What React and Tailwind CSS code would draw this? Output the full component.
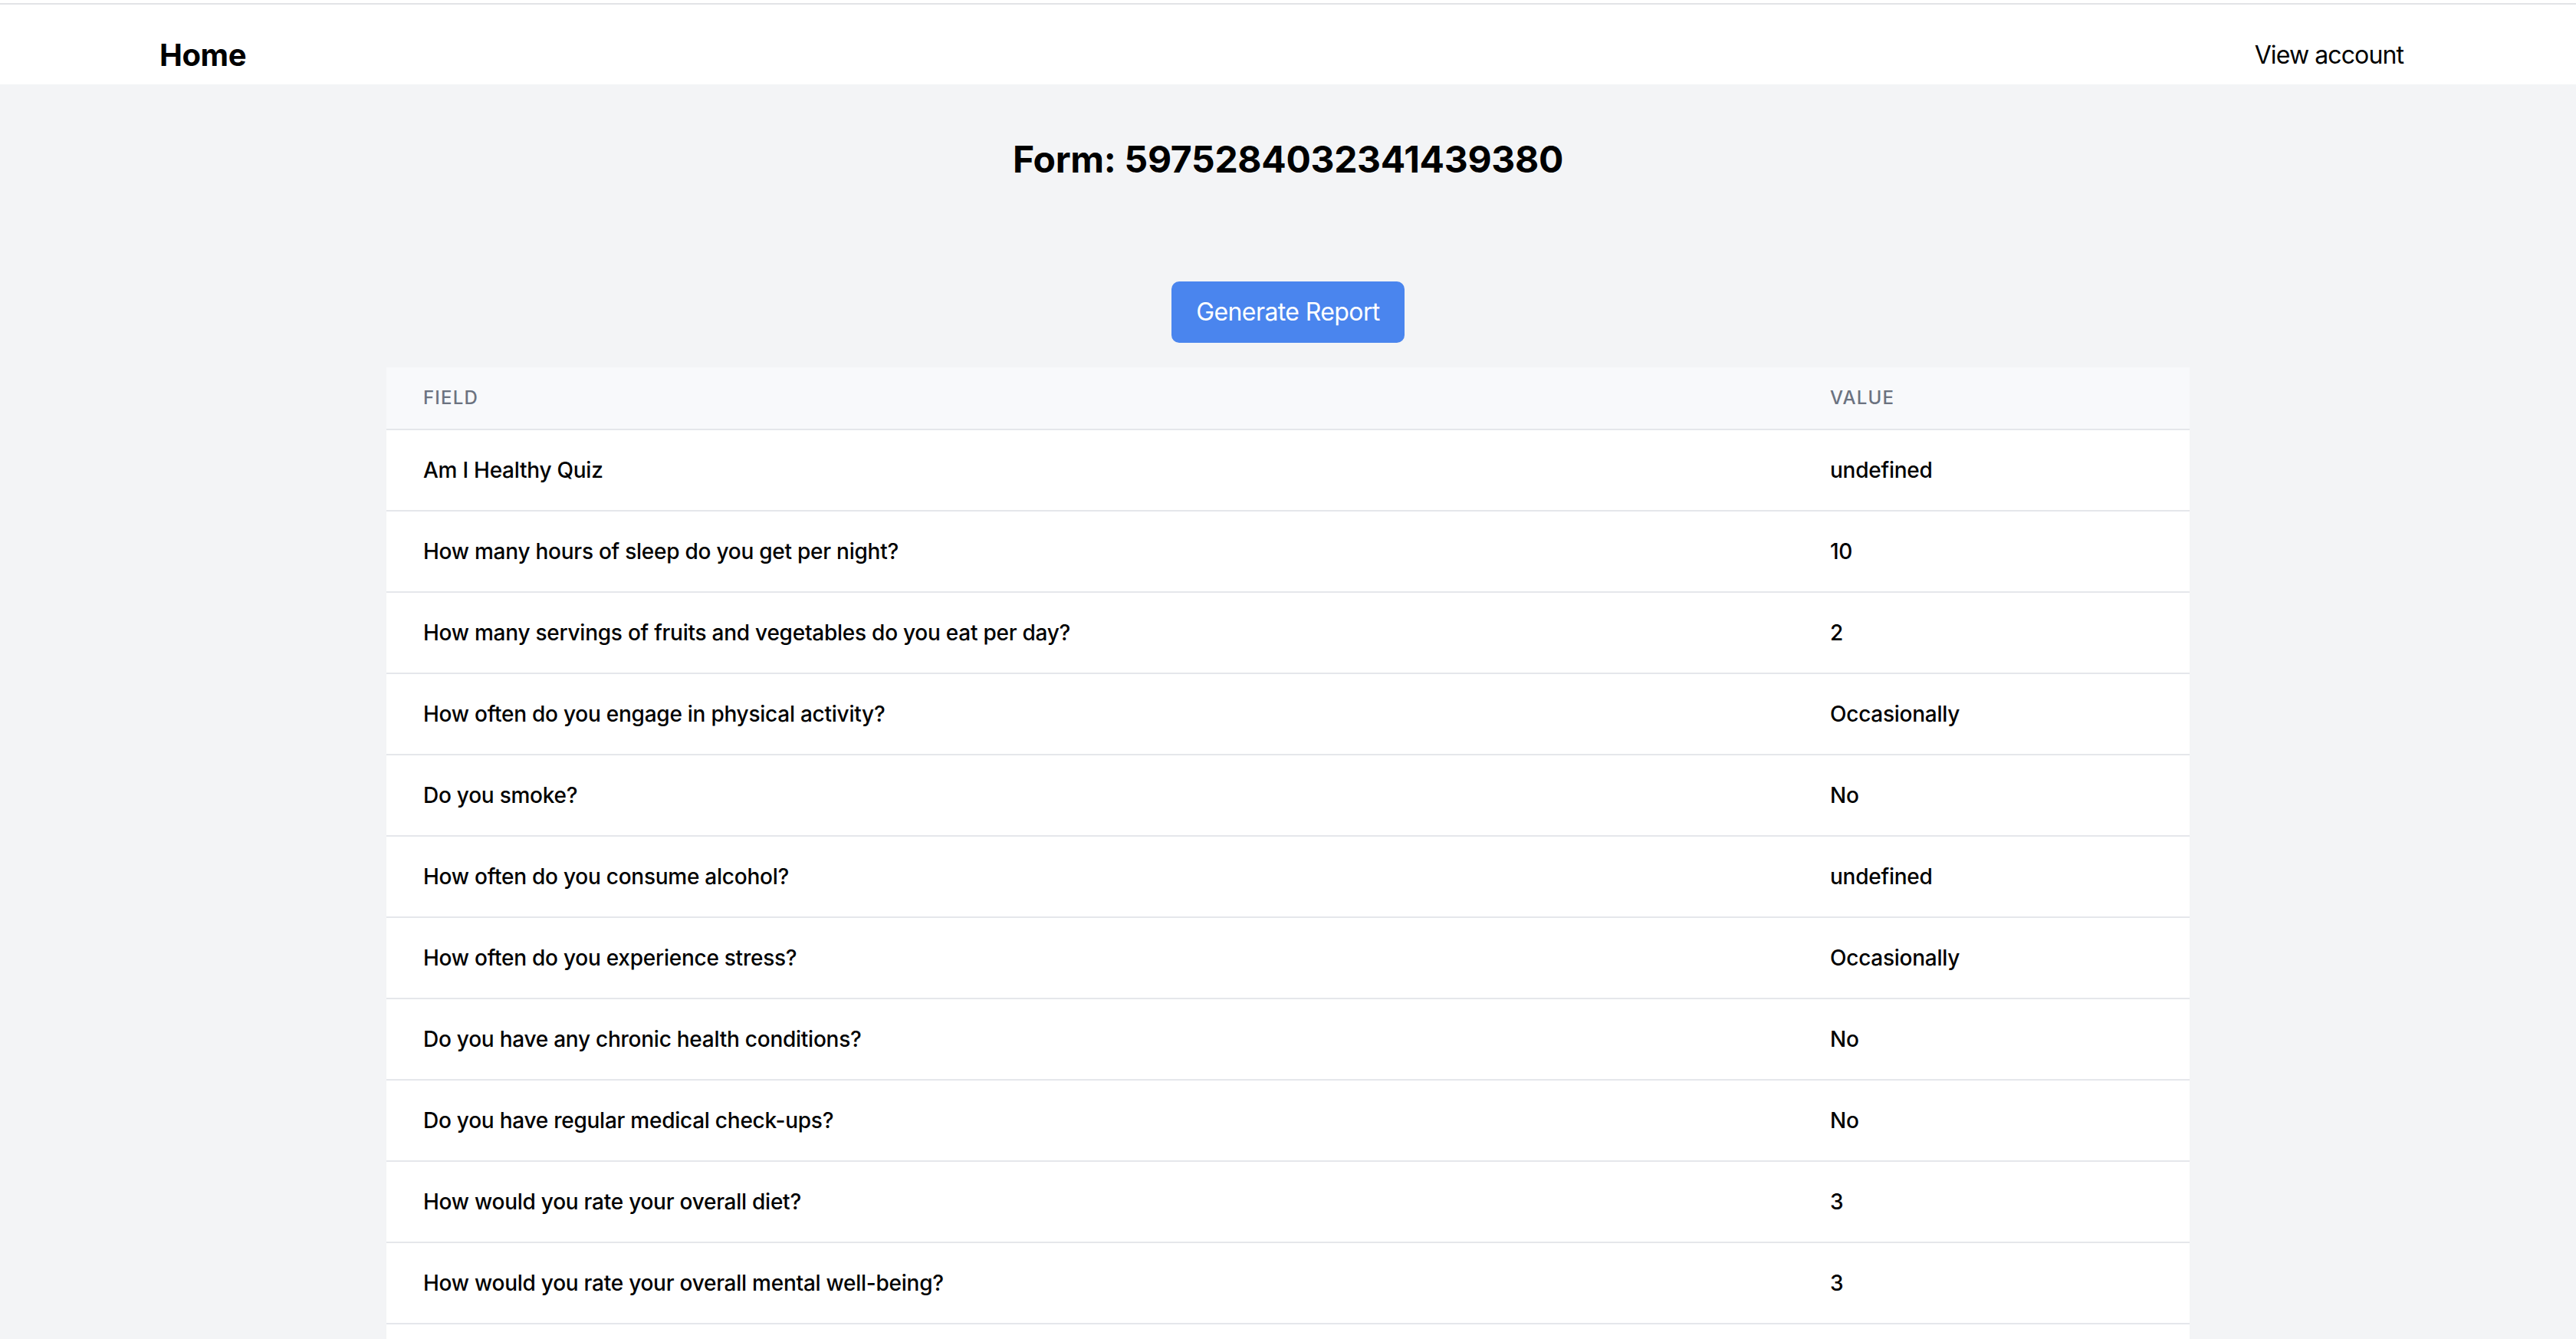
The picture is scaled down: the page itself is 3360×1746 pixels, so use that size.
import React from 'react';

const rows = [
  ['Am I Healthy Quiz', 'undefined'],
  ['How many hours of sleep do you get per night?', '10'],
  ['How many servings of fruits and vegetables do you eat per day?', '2'],
  ['How often do you engage in physical activity?', 'Occasionally'],
  ['Do you smoke?', 'No'],
  ['How often do you consume alcohol?', 'undefined'],
  ['How often do you experience stress?', 'Occasionally'],
  ['Do you have any chronic health conditions?', 'No'],
  ['Do you have regular medical check-ups?', 'No'],
  ['How would you rate your overall diet?', '3'],
  ['How would you rate your overall mental well-being?', '3'],
];

export default function App() {
  return (
    <div className="min-h-screen bg-[#f3f4f6] font-['Inter','Noto_Sans',sans-serif] text-[#111827]">
      {/* top nav */}
      <header className="bg-white pt-[4px]">
        <div className="border-t-2 border-[#e2e3e6]" />
        <nav className="flex items-center justify-between pl-[208px] pr-[225px] pt-[38px] pb-[10px]">
          <a className="text-[40px] leading-[56px] font-bold tracking-[-0.4px] text-black">Home</a>
          <a className="text-[32px] leading-[48px] tracking-[-0.9px] text-black">View account</a>
        </nav>
      </header>

      <main className="flex flex-col items-center pt-[66px]">
        <h1 className="text-[48px] leading-[64px] font-bold tracking-[-0.3px] text-black">Form: 5975284032341439380</h1>

        <button className="mt-[127px] rounded-[10px] bg-[#4a85ee] px-[32px] py-[16px] text-[32px] leading-[48px] tracking-[-0.6px] text-white">
          Generate Report
        </button>

        <table className="mt-[32px] w-[2352px] border-collapse bg-white">
          <thead className="bg-[#f8f9fb]">
            <tr className="border-b-2 border-[#e5e7eb]">
              <th className="w-[1835px] px-[48px] py-[24px] text-left text-[24px] leading-[32px] font-medium uppercase tracking-wider text-[#6b7280]">
                Field
              </th>
              <th className="px-[48px] py-[24px] text-left text-[24px] leading-[32px] font-medium uppercase tracking-wider text-[#6b7280]">
                Value
              </th>
            </tr>
          </thead>
          <tbody>
            {rows.map(([field, value], i) => (
              <tr key={i} className="border-b-2 border-[#e5e7eb]">
                <td className="whitespace-nowrap px-[48px] py-[32px] text-[28px] leading-[40px] font-medium tracking-[-0.25px] text-black">{field}</td>
                <td className="whitespace-nowrap px-[48px] py-[32px] text-[28px] leading-[40px] font-medium tracking-[-0.25px] text-black">{value}</td>
              </tr>
            ))}
            {/* next row starts just below the fold */}
            <tr>
              <td className="h-[106px]" />
              <td className="h-[106px]" />
            </tr>
          </tbody>
        </table>
      </main>
    </div>
  );
}
